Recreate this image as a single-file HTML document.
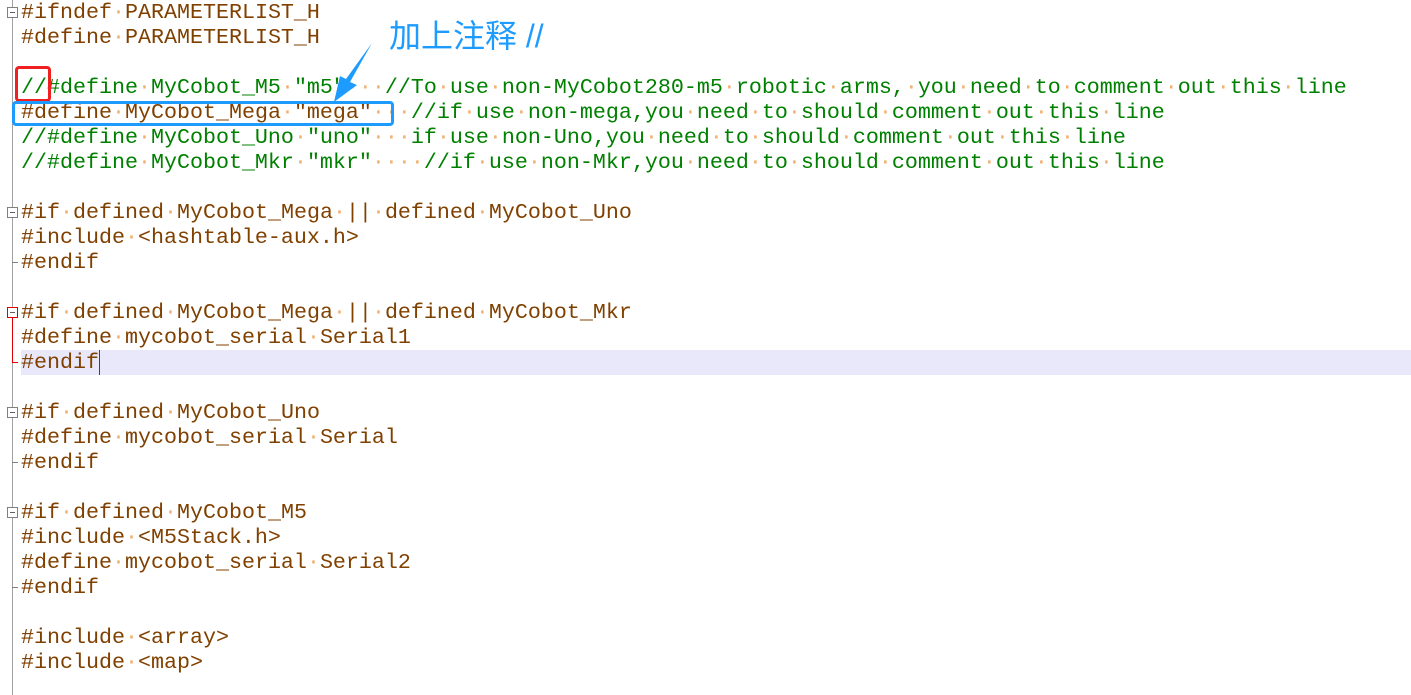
<!DOCTYPE html>
<html><head><meta charset="utf-8"><style>
html,body{margin:0;padding:0;background:#fff;width:1411px;height:695px;overflow:hidden;position:relative}
.ed{position:absolute;left:21px;top:0;font-family:"Liberation Mono",monospace;font-size:21.67px;line-height:25px;color:#804000}
.ed div{height:25px;white-space:pre}
i{font-style:normal;color:#f0b070}
.c{color:#008000}
.c i{color:#f0b070}
.hl{position:absolute;left:21px;top:350px;width:1390px;height:25px;background:#e8e8fa}
.gut{position:absolute;left:12px;top:0;width:1px;height:695px;background:#a0a0a0}
.box{position:absolute;left:7px;width:9px;height:9px;border:1px solid #808080;background:#fff}
.box:after{content:"";position:absolute;left:2px;top:4px;width:5px;height:1px;background:#606060}
.corner{position:absolute;left:12px;width:6px;height:1px;background:#808080}
</style></head><body>
<div class="hl"></div>
<div class="gut"></div>
<div style="position:absolute;left:12px;top:317px;width:1px;height:45px;background:#e00000"></div>
<div class="box" style="top:7px"></div>
<div class="box" style="top:207px"></div>
<div class="box" style="top:307px;border-color:#e00000"></div>
<div class="box" style="top:407px"></div>
<div class="box" style="top:507px"></div>
<div class="corner" style="top:262px"></div>
<div class="corner" style="top:362px;background:#e00000"></div>
<div class="corner" style="top:462px"></div>
<div class="corner" style="top:587px"></div>
<div class="ed"><div>#ifndef<i>·</i>PARAMETERLIST_H</div><div>#define<i>·</i>PARAMETERLIST_H</div><div></div><div class="c">//#define<i>·</i>MyCobot_M5<i>·</i>"m5"<i>·</i><i>·</i><i>·</i>//To<i>·</i>use<i>·</i>non-MyCobot280-m5<i>·</i>robotic<i>·</i>arms,<i>·</i>you<i>·</i>need<i>·</i>to<i>·</i>comment<i>·</i>out<i>·</i>this<i>·</i>line</div><div>#define<i>·</i>MyCobot_Mega<i>·</i>"mega"<i>·</i><i>·</i><i>·</i><span class="c">//if<i>·</i>use<i>·</i>non-mega,you<i>·</i>need<i>·</i>to<i>·</i>should<i>·</i>comment<i>·</i>out<i>·</i>this<i>·</i>line</span></div><div class="c">//#define<i>·</i>MyCobot_Uno<i>·</i>"uno"<i>·</i><i>·</i><i>·</i>if<i>·</i>use<i>·</i>non-Uno,you<i>·</i>need<i>·</i>to<i>·</i>should<i>·</i>comment<i>·</i>out<i>·</i>this<i>·</i>line</div><div class="c">//#define<i>·</i>MyCobot_Mkr<i>·</i>"mkr"<i>·</i><i>·</i><i>·</i><i>·</i>//if<i>·</i>use<i>·</i>non-Mkr,you<i>·</i>need<i>·</i>to<i>·</i>should<i>·</i>comment<i>·</i>out<i>·</i>this<i>·</i>line</div><div></div><div>#if<i>·</i>defined<i>·</i>MyCobot_Mega<i>·</i>||<i>·</i>defined<i>·</i>MyCobot_Uno</div><div>#include<i>·</i>&lt;hashtable-aux.h&gt;</div><div>#endif</div><div></div><div>#if<i>·</i>defined<i>·</i>MyCobot_Mega<i>·</i>||<i>·</i>defined<i>·</i>MyCobot_Mkr</div><div>#define<i>·</i>mycobot_serial<i>·</i>Serial1</div><div>#endif<span style="display:inline-block;width:1px;height:25px;background:#8000ff;vertical-align:top"></span></div><div></div><div>#if<i>·</i>defined<i>·</i>MyCobot_Uno</div><div>#define<i>·</i>mycobot_serial<i>·</i>Serial</div><div>#endif</div><div></div><div>#if<i>·</i>defined<i>·</i>MyCobot_M5</div><div>#include<i>·</i>&lt;M5Stack.h&gt;</div><div>#define<i>·</i>mycobot_serial<i>·</i>Serial2</div><div>#endif</div><div></div><div>#include<i>·</i>&lt;array&gt;</div><div>#include<i>·</i>&lt;map&gt;</div></div>
<div style="position:absolute;left:15px;top:66px;width:30px;height:30px;border:3px solid #f02020;border-radius:4px"></div>
<div style="position:absolute;left:12px;top:101px;width:376px;height:19px;border:3px solid #1e9bff;border-radius:4px"></div>
<svg style="position:absolute;left:0;top:0" width="1411" height="695">
<polygon points="372,43 350,82 357,85 334,102 340,76 346,79" fill="#1e9bff"/>
</svg>
<div style="position:absolute;left:389px;top:16px;font-family:'Liberation Sans','Noto Sans CJK SC',sans-serif;font-size:32px;line-height:40px;color:#1e9bff;white-space:pre">加上注释 //</div>
</body></html>
